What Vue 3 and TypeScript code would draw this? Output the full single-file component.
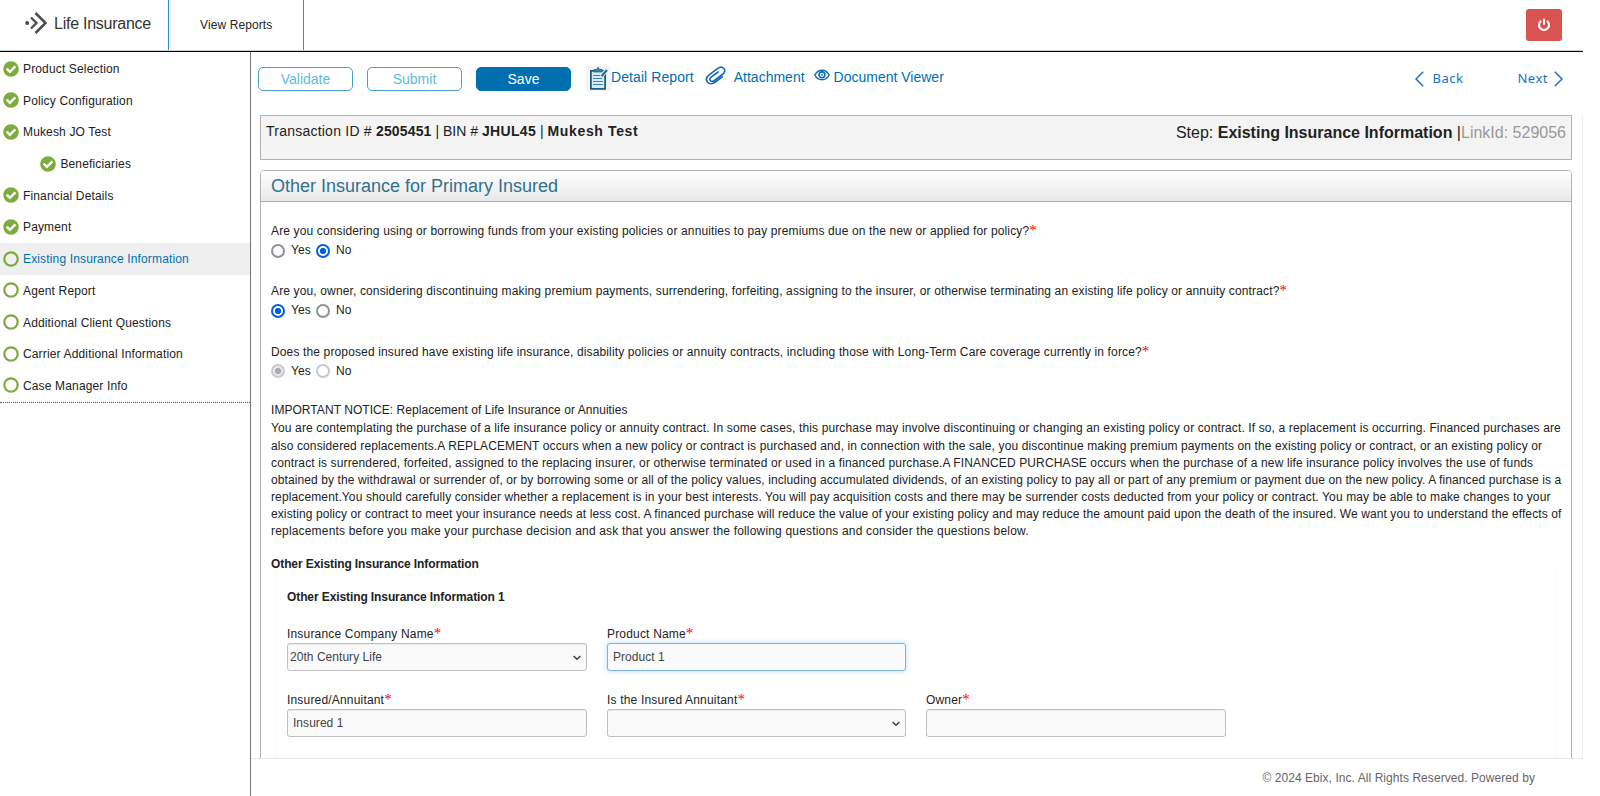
<script setup lang="ts">
import { ref } from 'vue'

interface Step {
  label: string
  done: boolean
  child?: boolean
  active?: boolean
}

interface Question {
  name: string
  text: string
  answer: 'Yes' | 'No'
  disabled?: boolean
}

interface NoticeLine {
  tracking: number
  text: string
}

const steps: Step[] = [
  { label: 'Product Selection', done: true },
  { label: 'Policy Configuration', done: true },
  { label: 'Mukesh JO Test', done: true },
  { label: 'Beneficiaries', done: true, child: true },
  { label: 'Financial Details', done: true },
  { label: 'Payment', done: true },
  { label: 'Existing Insurance Information', done: false, active: true },
  { label: 'Agent Report', done: false },
  { label: 'Additional Client Questions', done: false },
  { label: 'Carrier Additional Information', done: false },
  { label: 'Case Manager Info', done: false },
]

const questions = ref<Question[]>([
  {
    name: 'q1',
    text: 'Are you considering using or borrowing funds from your existing policies or annuities to pay premiums due on the new or applied for policy?',
    answer: 'No',
  },
  {
    name: 'q2',
    text: 'Are you, owner, considering discontinuing making premium payments, surrendering, forfeiting, assigning to the insurer, or otherwise terminating an existing life policy or annuity contract?',
    answer: 'Yes',
  },
  {
    name: 'q3',
    text: 'Does the proposed insured have existing life insurance, disability policies or annuity contracts, including those with Long-Term Care coverage currently in force?',
    answer: 'Yes',
    disabled: true,
  },
])

const options: Array<'Yes' | 'No'> = ['Yes', 'No']

const notice: NoticeLine[] = [
  { tracking: 0.124, text: 'You are contemplating the purchase of a life insurance policy or annuity contract. In some cases, this purchase may involve discontinuing or changing an existing policy or contract. If so, a replacement is occurring. Financed purchases are' },
  { tracking: 0.121, text: 'also considered replacements.A REPLACEMENT occurs when a new policy or contract is purchased and, in connection with the sale, you discontinue making premium payments on the existing policy or contract, or an existing policy or' },
  { tracking: 0.13, text: 'contract is surrendered, forfeited, assigned to the replacing insurer, or otherwise terminated or used in a financed purchase.A FINANCED PURCHASE occurs when the purchase of a new life insurance policy involves the use of funds' },
  { tracking: 0.102, text: 'obtained by the withdrawal or surrender of, or by borrowing some or all of the policy values, including accumulated dividends, of an existing policy to pay all or part of any premium or payment due on the new policy. A financed purchase is a' },
  { tracking: 0.123, text: 'replacement.You should carefully consider whether a replacement is in your best interests. You will pay acquisition costs and there may be surrender costs deducted from your policy or contract. You may be able to make changes to your' },
  { tracking: 0.098, text: 'existing policy or contract to meet your insurance needs at less cost. A financed purchase will reduce the value of your existing policy and may reduce the amount paid upon the death of the insured. We want you to understand the effects of' },
  { tracking: 0.18, text: 'replacements before you make your purchase decision and ask that you answer the following questions and consider the questions below.' },
]

const company = ref('20th Century Life')
const product = ref('Product 1')
const insured = ref('Insured 1')
const annuitant = ref('')
const owner = ref('')
</script>

<template>
  <div class="page">
    <header class="top">
      <div class="brand">
        <svg class="logo" width="24" height="24" viewBox="0 0 24 24" fill="none" stroke="#4d4d4f">
          <circle cx="3.200" cy="12" r="2" fill="#4d4d4f" stroke="none" />
          <path d="M7 6.500l5.500 5.500L7 17.500" stroke-width="2.300" />
          <path d="M11.500 2L21.500 12 11.500 22" stroke-width="2.500" />
        </svg>
        <span class="brand-name">Life Insurance</span>
      </div>
      <a class="reports">View Reports</a>
      <button class="power" aria-label="Log out">
        <svg width="14" height="14" viewBox="0 0 14 14" fill="none" stroke="#fff" stroke-width="2">
          <path d="M4.200 2.800a5 5 0 1 0 5.600 0M7 .8v6" />
        </svg>
      </button>
    </header>

    <div class="body">
      <nav class="side">
        <a
          v-for="s in steps"
          :key="s.label"
          class="step"
          :class="{ child: s.child, active: s.active }"
        >
          <svg width="16" height="16" viewBox="0 0 16 16" fill="none">
            <template v-if="s.done">
              <circle cx="8" cy="8" r="7.800" fill="#7dab3e" />
              <path d="M3.700 7.700l3.200 3.200 5.500-5.500" stroke="#fff" stroke-width="2.400" />
            </template>
            <circle v-else cx="8" cy="8" r="6.700" stroke="#7dab3e" stroke-width="2.200" />
          </svg>
          <span>{{ s.label }}</span>
        </a>
      </nav>

      <main class="main">
        <div class="toolbar">
          <button class="btn">Validate</button>
          <button class="btn">Submit</button>
          <button class="btn primary">Save</button>
          <a class="tool detail">
            <svg width="25" height="25" viewBox="0 0 25 25" fill="none">
              <rect width="25" height="25" fill="#f3f4f5" />
              <path d="M4.900 4.900h14.200v18H4.900z" fill="#d5eef3" stroke="#1f5f80" stroke-width="1.800" />
              <path d="M8 6V3.500h2.500L12 1.200l1.500 2.300H16V6z" fill="#2d84a3" stroke="#1f5f80" stroke-width=".8" />
              <path d="M7 9.500h7M7 12.500h9M7 15.500h10M7 18.500h10" stroke="#4a8098" stroke-width="1.200" />
              <path d="M20.700 4l-5.200 6" stroke="#f3f4f5" stroke-width="4" />
              <path d="M21 4l-5.500 6.300" stroke="#1f7297" stroke-width="2.200" />
            </svg>
            <span>Detail Report</span>
          </a>
          <a class="tool attach">
            <svg width="21" height="20" viewBox="0 0 21 20" fill="none" stroke="#1269c4" stroke-width="1.600" stroke-linecap="round" stroke-linejoin="round">
              <path d="M17.200 10.900l-6.900 5.300c-3 2.200-6.200 2-7.900-.2-1.600-2.200-1-5 1.800-7.100l8.200-6.200c2.400-1.800 5-1.900 6.500-.1 1.500 1.900.8 4.100-1.500 5.900l-7.900 6c-1.600 1.200-3.300 1.200-4.200.1-.9-1.200-.3-2.600 1.200-3.700l6.600-4.900" />
            </svg>
            <span>Attachment</span>
          </a>
          <a class="tool viewer">
            <svg width="16" height="12" viewBox="0 0 16 12" fill="none" stroke="#0a6dbb">
              <path d="M.8 6C4.200-.4 11.800-.4 15.200 6 11.800 12.400 4.200 12.400.8 6z" stroke-width="1.500" />
              <circle cx="8" cy="5.800" r="2.900" stroke-width="1.600" />
              <circle cx="8" cy="5.800" r=".9" fill="#0a6dbb" stroke="none" />
            </svg>
            <span>Document Viewer</span>
          </a>
          <div class="pager">
            <a class="back">
              <svg width="9" height="16" viewBox="0 0 9 16" fill="none" stroke="#1a6fc9" stroke-width="1.500"><path d="M8.200.8L1 8l7.200 7.200" /></svg>
              <span>Back</span>
            </a>
            <a class="next">
              <span>Next</span>
              <svg width="9" height="16" viewBox="0 0 9 16" fill="none" stroke="#1a6fc9" stroke-width="1.500"><path d="M.8.8L8 8 .8 15.200" /></svg>
            </a>
          </div>
        </div>

        <div class="scroll">
          <div class="summary">
            <div class="txn"><span class="txn-label">Transaction ID # </span><b>2505451</b> | BIN # <b class="bin">JHUL45</b> | <b class="client">Mukesh Test</b></div>
            <div class="stepname">Step: <b>Existing Insurance Information</b> |<span>LinkId: 529056</span></div>
          </div>

          <section class="panel">
            <h2>Other Insurance for Primary Insured</h2>
            <div class="content">
              <div v-for="q in questions" :key="q.name" class="question">
                <div class="qtext">{{ q.text }}<i class="req">*</i></div>
                <div class="radios">
                  <label v-for="o in options" :key="o" :class="{ disabled: q.disabled }">
                    <input v-model="q.answer" type="radio" :name="q.name" :value="o" :disabled="q.disabled" />
                    <span>{{ o }}</span>
                  </label>
                </div>
              </div>

              <div class="notice">
                <div class="notice-title">IMPORTANT NOTICE: Replacement of Life Insurance or Annuities</div>
                <div
                  v-for="(line, i) in notice"
                  :key="i"
                  class="line"
                  :style="{ letterSpacing: line.tracking + 'px' }"
                >{{ line.text }}</div>
              </div>

              <h3>Other Existing Insurance Information</h3>
              <div class="sub">
                <h4>Other Existing Insurance Information 1</h4>
                <div class="grid">
                  <label class="field">
                    <span>Insurance Company Name<i class="req">*</i></span>
                    <div class="select">
                      {{ company }}
                      <svg width="8" height="6" viewBox="0 0 8 6" fill="none" stroke="#3c3c43" stroke-width="1.500"><path d="M.7 1L4 4.300 7.300 1" /></svg>
                    </div>
                  </label>
                  <label class="field">
                    <span>Product Name<i class="req">*</i></span>
                    <input v-model="product" class="focused" type="text" />
                  </label>
                  <div></div>
                  <label class="field">
                    <span>Insured/Annuitant<i class="req">*</i></span>
                    <input v-model="insured" type="text" />
                  </label>
                  <label class="field">
                    <span>Is the Insured Annuitant<i class="req">*</i></span>
                    <div class="select">
                      {{ annuitant }}
                      <svg width="8" height="6" viewBox="0 0 8 6" fill="none" stroke="#3c3c43" stroke-width="1.500"><path d="M.7 1L4 4.300 7.300 1" /></svg>
                    </div>
                  </label>
                  <label class="field">
                    <span>Owner<i class="req">*</i></span>
                    <input v-model="owner" type="text" />
                  </label>
                </div>
              </div>
            </div>
          </section>
        </div>

        <footer>© 2024 Ebix, Inc. All Rights Reserved. Powered by</footer>
      </main>
    </div>
  </div>
</template>

<style>
body {
  background: #fff;
}
</style>

<style scoped>
* {
  box-sizing: border-box;
}
.page {
  width: 1600px;
  height: 796px;
  overflow: hidden;
  background: #fff;
  color: #222;
  font: 12px/17px "Liberation Sans", Arial, sans-serif;
}
.top {
  display: flex;
  width: 1583px;
  height: 52px;
  border-bottom: 1px solid #000;
  box-shadow: inset 0 -1px #d0d0d0;
}
.brand {
  display: flex;
  align-items: center;
  width: 169px;
  height: 50px;
  padding: 0 0 4px 24px;
  border-right: 1px solid #2196d3;
}
.brand-name {
  margin-left: 6px;
  color: #333;
  font-size: 16px;
  letter-spacing: -.25px;
  white-space: nowrap;
}
.reports {
  width: 135px;
  height: 50px;
  padding-left: 31px;
  border-right: 1px solid #2196d3;
  letter-spacing: .1px;
  line-height: 51px;
}
.power {
  display: flex;
  align-items: center;
  justify-content: center;
  width: 36px;
  height: 32px;
  margin: 9px 21px 0 auto;
  padding: 0;
  border: 0;
  border-radius: 3px;
  background: #d9534f;
}
.body {
  display: flex;
  height: 744px;
}
.side {
  width: 251px;
  flex: none;
  padding-top: 1px;
  border-right: 1px solid #777;
}
.step {
  display: flex;
  align-items: center;
  height: 31.700px;
  padding: 1.400px 0 0 2.600px;
  letter-spacing: .15px;
}
.step svg {
  flex: none;
  margin: 0 4.400px 2px 0;
}
.step.child {
  padding-left: 40px;
}
.step.active {
  background: #efefef;
  color: #006fb0;
}
.step:last-child {
  height: 33px;
  padding-bottom: 1px;
  border-bottom: 1px dotted #555;
}
.main {
  width: 1332px;
  flex: none;
}
.toolbar {
  display: flex;
  align-items: flex-start;
  height: 62px;
  padding: 15px 0 0 7px;
}
.btn {
  width: 95px;
  height: 24px;
  margin-right: 14px;
  padding: 0;
  border: 1px solid #4a9fd0;
  border-radius: 5px;
  background: #fff;
  color: #5bbcdf;
  font: 14px/22px "Liberation Sans", Arial, sans-serif;
}
.btn.primary {
  border-color: #006fb0;
  background: #006fb0;
  color: #fff;
}
.tool {
  display: flex;
  color: #006fb0;
  font-size: 14px;
  line-height: 20px;
  white-space: nowrap;
}
.detail {
  letter-spacing: .08px;
}
.detail svg {
  margin: -1px 0 0 1px;
}
.attach svg {
  margin: -1px 8px 0 11px;
}
.viewer svg {
  margin: 2px 4px 0 9px;
}
.pager {
  display: flex;
  margin: 4px 20px 0 auto;
  color: #1a6fc9;
  font: 13px/15px "Noto Sans", "Open Sans", sans-serif;
}
.pager a {
  display: flex;
}
.back span {
  margin-left: 9px;
  letter-spacing: .5px;
}
.next {
  margin-left: 54px;
  letter-spacing: .5px;
}
.next svg {
  margin-left: 6px;
}
.scroll {
  height: 645px;
  padding: 1px 0 0 9px;
  overflow: hidden;
  border-right: 1px solid #eee;
  border-bottom: 1px solid #eaeaea;
}
.summary {
  display: flex;
  justify-content: space-between;
  width: 1312px;
  height: 45px;
  padding: 0 5px;
  border: 1px solid #b0b0b0;
  background: #f4f4f4;
  white-space: nowrap;
}
.txn {
  font-size: 14px;
  line-height: 31px;
}
.txn b {
  letter-spacing: .15px;
}
.txn .txn-label {
  letter-spacing: .23px;
}
.txn .bin {
  letter-spacing: .35px;
}
.txn .client {
  letter-spacing: .64px;
}
.stepname {
  font-size: 16px;
  line-height: 33px;
}
.stepname span {
  color: #999;
}
.panel {
  width: 1312px;
  height: 640px;
  margin-top: 10px;
  border: 1px solid #b0b0b0;
  border-radius: 4px 4px 0 0;
}
h2 {
  height: 31px;
  margin: 0;
  padding-left: 10px;
  border-bottom: 1px solid #b0b0b0;
  border-radius: 3px 3px 0 0;
  background: linear-gradient(#fff, #e8e8e8);
  color: #31708f;
  font-size: 18px;
  font-weight: 400;
  line-height: 31px;
}
.content {
  padding: 21px 10px 0;
}
.question {
  height: 60.400px;
  letter-spacing: .138px;
  white-space: nowrap;
}
.req {
  display: inline-block;
  width: 8px;
  height: 10px;
  color: #f00;
  font: 15px/10px "Liberation Serif", serif;
  letter-spacing: 0;
}
.radios {
  display: flex;
  height: 21px;
}
.radios label {
  display: flex;
  align-items: center;
  width: 45px;
}
.radios input {
  appearance: none;
  width: 14px;
  height: 14px;
  margin: 0 6px 0 0;
  border: 2px solid #8f8f9d;
  border-radius: 50%;
  background: #fff;
}
.radios input:checked {
  border-color: #0061e0;
  background: radial-gradient(circle, #0061e0 2.800px, #fff 3.500px);
}
.radios .disabled input {
  border-color: #c7c7ce;
}
.radios .disabled input:checked {
  border-color: #c7c7ce;
  background: radial-gradient(circle, #a9a9b2 2.800px, #e9e9ed 3.500px);
}
.notice {
  margin-top: -1.700px;
  white-space: nowrap;
}
.notice-title {
  height: 18px;
  letter-spacing: .05px;
}
.line {
  height: 17.140px;
}
h3,
h4 {
  margin: 0;
  font-size: 12px;
  letter-spacing: -.1px;
  line-height: 17px;
}
h3 {
  height: 9px;
  margin-top: 16px;
}
.sub {
  width: 1282px;
  height: 260px;
  margin-left: 4px;
  padding: 24px 11px 0;
  border: 1px solid #fbfbfb;
  border-width: 0 1px;
}
.grid {
  display: grid;
  grid-template-columns: 300px 299px 300px;
  gap: 21px 20px;
  margin-top: 20px;
}
.field {
  display: block;
  height: 45px;
}
.field > span {
  display: block;
  height: 17px;
  letter-spacing: .18px;
}
.field input,
.select {
  display: flex;
  align-items: center;
  justify-content: space-between;
  width: 100%;
  height: 28px;
  padding: 0 5px;
  border: 1px solid #c0c0c0;
  border-radius: 3px;
  outline: 0;
  background: #fafafa;
  box-shadow: inset 0 1px 1px rgba(0, 0, 0, .06);
  color: #444;
  font: 12px/17px "Liberation Sans", Arial, sans-serif;
  letter-spacing: .04px;
}
.select {
  padding: 0 5px 0 2px;
}
.select svg {
  margin: 2px 0 0 auto;
}
.field input.focused {
  border-color: #7fb4e0;
  box-shadow: 0 0 5px rgba(102, 175, 233, .5);
}
footer {
  padding: 11px 48px 0 0;
  color: #666;
  letter-spacing: .06px;
  text-align: right;
}
</style>
